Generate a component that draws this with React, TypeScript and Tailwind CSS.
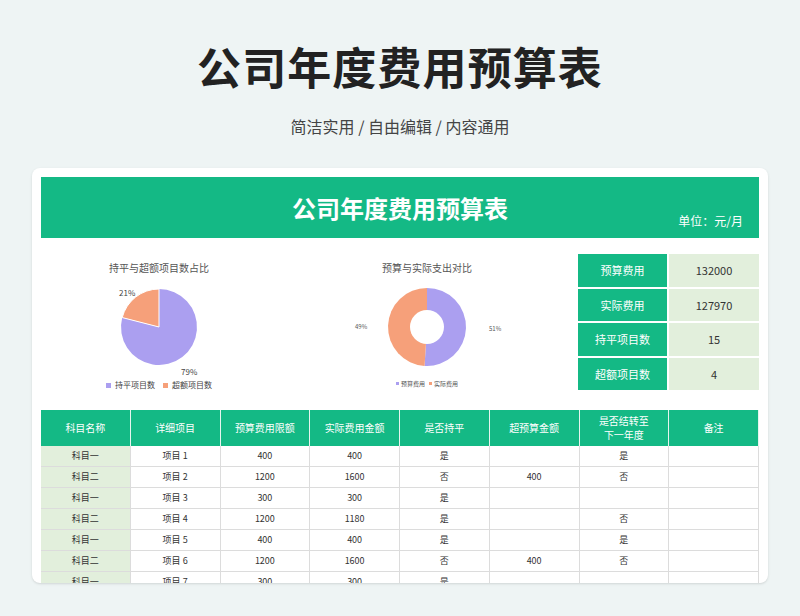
import React from 'react';

const F = { fontFamily: '"Noto Sans CJK SC", "Noto Sans", sans-serif' };

const rows = [
  ['科目一', '项目 1', '400', '400', '是', '', '是', ''],
  ['科目二', '项目 2', '1200', '1600', '否', '400', '否', ''],
  ['科目一', '项目 3', '300', '300', '是', '', '', ''],
  ['科目二', '项目 4', '1200', '1180', '是', '', '否', ''],
  ['科目一', '项目 5', '400', '400', '是', '', '是', ''],
  ['科目二', '项目 6', '1200', '1600', '否', '400', '否', ''],
  ['科目一', '项目 7', '300', '300', '是', '', '', ''],
];

const heads = ['科目名称', '详细项目', '预算费用限额', '实际费用金额', '是否持平', '超预算金额', '是否结转至\n下一年度', '备注'];

const stats = [
  ['预算费用', '132000'],
  ['实际费用', '127970'],
  ['持平项目数', '15'],
  ['超额项目数', '4'],
];

function arc(cx: number, cy: number, r: number, a0: number, a1: number) {
  const p = (a: number) => [cx + r * Math.sin(a), cy - r * Math.cos(a)];
  const [x0, y0] = p(a0);
  const [x1, y1] = p(a1);
  const large = a1 - a0 > Math.PI ? 1 : 0;
  return `M${cx} ${cy} L${x0} ${y0} A${r} ${r} 0 ${large} 1 ${x1} ${y1} Z`;
}

export default function App() {
  const t = 2 * Math.PI;
  return (
    <div className="w-[800px] h-[616px] overflow-hidden bg-[#eef4f4] flex flex-col items-center" style={F}>
      <h1 className="mt-[38px] text-[44px] leading-[56px] font-bold text-[#222] tracking-wide">公司年度费用预算表</h1>
      <p className="mt-[20px] text-[16px] text-[#444]">简洁实用 / 自由编辑 / 内容通用</p>
      <div className="mt-[30px] w-[736px] h-[415px] bg-white rounded-lg p-[9px] overflow-hidden shadow-sm">
        <div className="h-[61px] bg-[#14b985] relative flex items-center justify-center">
          <span className="text-white text-[24px] font-bold">公司年度费用预算表</span>
          <span className="absolute right-[16px] bottom-[8px] text-white text-[12px]">单位：元/月</span>
        </div>
        <div className="h-[172px] flex">
          <div className="w-[236px] flex flex-col items-center pt-[22px]">
            <div className="text-[10px] text-[#555]">持平与超额项目数占比</div>
            <svg width="140" height="104" viewBox="0 0 140 104">
              <path d={arc(70, 52, 38, 0, t * 0.79)} fill="#ab9ff0" />
              <path d={arc(70, 52, 38, t * 0.79, t)} fill="#f6a07a" stroke="#fff" strokeWidth="1" />
              <text x="30" y="21" fontSize="8" fill="#444">21%</text>
              <text x="92" y="100" fontSize="8" fill="#444">79%</text>
            </svg>
            <div className="flex gap-2 text-[8px] text-[#444] items-center">
              <span className="flex items-center gap-1"><span className="w-[5px] h-[5px] bg-[#ab9ff0]" />持平项目数</span>
              <span className="flex items-center gap-1"><span className="w-[5px] h-[5px] bg-[#f6a07a]" />超额项目数</span>
            </div>
          </div>
          <div className="w-[300px] flex flex-col items-center pt-[22px]">
            <div className="text-[10px] text-[#555]">预算与实际支出对比</div>
            <svg width="180" height="104" viewBox="0 0 180 104">
              <path d={arc(90, 52, 39, 0, t * 0.51)} fill="#ab9ff0" />
              <path d={arc(90, 52, 39, t * 0.51, t)} fill="#f6a07a" />
              <circle cx="90" cy="52" r="17" fill="#fff" />
              <text x="18" y="54" fontSize="6" fill="#555">49%</text>
              <text x="152" y="56" fontSize="6" fill="#555">51%</text>
            </svg>
            <div className="flex gap-1 text-[6px] text-[#555] items-center">
              <span className="flex items-center gap-[2px]"><span className="w-[3px] h-[3px] bg-[#ab9ff0]" />预算费用</span>
              <span className="flex items-center gap-[2px]"><span className="w-[3px] h-[3px] bg-[#f6a07a]" />实际费用</span>
            </div>
          </div>
          <div className="flex-1 pt-[16px] pl-[1px]">
            {stats.map(([k, v]) => (
              <div key={k} className="flex h-[34.5px] border-b-2 border-white">
                <div className="w-[89px] bg-[#14b985] text-white text-[11px] flex items-center justify-center">{k}</div>
                <div className="flex-1 border-l-2 border-white bg-[#e2efdc] text-[#333] text-[11px] flex items-center justify-center">{v}</div>
              </div>
            ))}
          </div>
        </div>
        <div className="grid grid-cols-8 text-[10px]">
          {heads.map((h) => (
            <div key={h} className="h-[36px] bg-[#14b985] text-white border-r border-[#e5f5ee] flex items-center justify-center text-center whitespace-pre leading-[14px]">{h}</div>
          ))}
          {rows.map((r, i) =>
            r.map((c, j) => (
              <div key={i + '-' + j} className={`h-[21px] border-r border-b border-[#dcdcdc] flex items-center justify-center text-[#333] text-[9px] ${j === 0 ? 'bg-[#e2efdc]' : 'bg-white'}`}>{c}</div>
            ))
          )}
        </div>
      </div>
    </div>
  );
}
